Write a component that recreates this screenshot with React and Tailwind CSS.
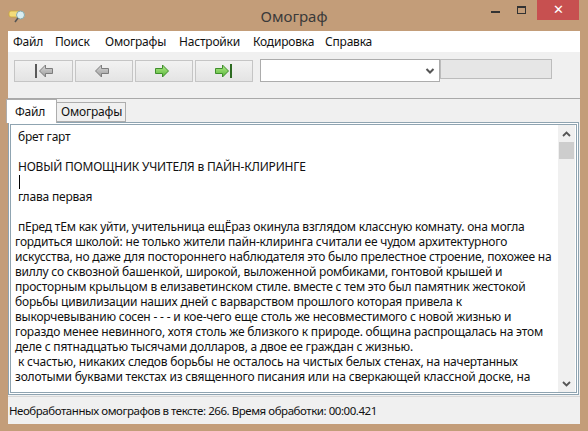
import React from "react";

const lines = [
  " брет гарт",
  "",
  " НОВЫЙ ПОМОЩНИК УЧИТЕЛЯ в ПАЙН-КЛИРИНГЕ",
  "CURSOR",
  " глава первая",
  "",
  " пЕред тЕм как уйти, учительница ещЁраз окинула взглядом классную комнату. она могла",
  "гордиться школой: не только жители пайн-клиринга считали ее чудом архитектурного",
  "искусства, но даже для постороннего наблюдателя это было прелестное строение, похожее на",
  "виллу со сквозной башенкой, широкой, выложенной ромбиками, гонтовой крышей и",
  "просторным крыльцом в елизаветинском стиле. вместе с тем это был памятник жестокой",
  "борьбы цивилизации наших дней с варварством прошлого которая привела к",
  "выкорчевыванию сосен - - - и кое-чего еще столь же несовместимого с новой жизнью и",
  "гораздо менее невинного, хотя столь же близкого к природе. община распрощалась на этом",
  "деле с пятнадцатью тысячами долларов, а двое ее граждан с жизнью.",
  " к счастью, никаких следов борьбы не осталось на чистых белых стенах, на начертанных",
  "золотыми буквами текстах из священного писания или на сверкающей классной доске, на",
];

function Arrow({ dir, bar, green }) {
  const fill = green ? "url(#g)" : "url(#s)";
  const stroke = green ? "#3f8f2c" : "#7d7d7d";
  const barColor = green ? "#2d6b22" : "#5a5a5a";
  const pts =
    dir === "right"
      ? "1.5,4.5 8.5,4.5 8.5,1 14.5,7 8.5,13 8.5,9.5 1.5,9.5"
      : "14.5,4.5 7.5,4.5 7.5,1 1.5,7 7.5,13 7.5,9.5 14.5,9.5";
  return (
    <svg width="20" height="14" viewBox={bar === "left" ? "-4 0 20 14" : "0 0 20 14"}>
      <defs>
        <linearGradient id="g" x1="0" y1="0" x2="0" y2="1">
          <stop offset="0" stopColor="#b4ec8c" />
          <stop offset="1" stopColor="#56b437" />
        </linearGradient>
        <linearGradient id="s" x1="0" y1="0" x2="0" y2="1">
          <stop offset="0" stopColor="#d8d8d8" />
          <stop offset="1" stopColor="#9c9c9c" />
        </linearGradient>
      </defs>
      <polygon points={pts} fill={fill} stroke={stroke} strokeWidth="1" />
      {bar === "left" && <rect x="-3" y="0" width="2" height="14" fill={barColor} />}
      {bar === "right" && <rect x="16" y="0" width="2" height="14" fill={barColor} />}
    </svg>
  );
}

function NavButton({ children, w }) {
  return (
    <div
      className={`${w} h-[22px] flex items-center justify-center border border-[#c5c5c5] bg-gradient-to-b from-[#f2f2f2] to-[#e4e4e4]`}
    >
      {children}
    </div>
  );
}

export default function App() {
  const font = { fontFamily: '"Noto Sans", "Open Sans", sans-serif' };
  return (
    <div
      className="w-[588px] h-[431px] bg-[#c39d79] flex flex-col overflow-hidden text-[12px] text-[#111] tracking-[-0.2px]"
      style={font}
    >
      {/* title bar */}
      <div className="h-[31px] flex items-start">
        <div className="pl-[8px] pt-[8px]">
          <svg width="18" height="16" viewBox="0 0 18 16">
            <rect x="1" y="3" width="11" height="6" rx="2" fill="#f3dc7a" stroke="#c9a53a" strokeWidth="0.8" />
            <circle cx="12.5" cy="7" r="4" fill="#d9eef2" stroke="#8aa" strokeWidth="1" />
            <line x1="10" y1="10" x2="7" y2="14" stroke="#555" strokeWidth="1.5" />
          </svg>
        </div>
        <div className="flex-1 text-center pt-[5px] text-[15px] tracking-normal text-[#3a3a3a] pl-[80px]">Омограф</div>
        <div className="flex items-start">
          <div className="w-[26px] h-[20px] flex items-center justify-center">
            <div className="w-[9px] h-[2px] bg-[#333] mt-[3px]"></div>
          </div>
          <div className="w-[26px] h-[20px] flex items-center justify-center">
            <div className="w-[9px] h-[8px] border border-[#333] border-t-2"></div>
          </div>
          <div className="w-[42px] h-[20px] bg-[#c75050] flex items-center justify-center text-white text-[13px] mr-[9px] ml-[3px]">
            ✕
          </div>
        </div>
      </div>

      {/* client */}
      <div className="flex-1 mx-[8px] mb-[7px] bg-[#f0f0f0] flex flex-col">
        {/* menu */}
        <div className="h-[21px] bg-white flex items-center pl-[5px]">
          <span className="w-[42px]">Файл</span>
          <span className="w-[50px]">Поиск</span>
          <span className="w-[74px]">Омографы</span>
          <span className="w-[74px]">Настройки</span>
          <span className="w-[72px]">Кодировка</span>
          <span>Справка</span>
        </div>

        {/* toolbar */}
        <div className="h-[47px] flex items-start pt-[7px] pl-[6px] border-b border-[#a9a9a9]">
          <div className="flex gap-[2px] mt-[1px]">
            <NavButton w="w-[59px]">
              <Arrow dir="left" bar="left" />
            </NavButton>
            <NavButton w="w-[58px]">
              <Arrow dir="left" />
            </NavButton>
            <NavButton w="w-[58px]">
              <Arrow dir="right" green />
            </NavButton>
            <NavButton w="w-[58px]">
              <Arrow dir="right" bar="right" green />
            </NavButton>
          </div>
          <div className="ml-[7px] w-[180px] h-[23px] bg-white border border-[#acacac] flex items-center justify-end pr-[4px]">
            <svg width="10" height="8" viewBox="0 0 10 8">
              <polyline points="1.5,2 5,5.5 8.5,2" fill="none" stroke="#555" strokeWidth="2" />
            </svg>
          </div>
          <div className="w-[112px] h-[20px] bg-[#e6e6e6] border border-[#bcbcbc]"></div>
        </div>

        {/* tabs */}
        <div className="h-[24px] flex items-end relative z-10">
          <div className="-ml-[2px] w-[51px] h-[24px] bg-white border border-[#adadad] border-b-0 flex items-center pl-[8px]">
            Файл
          </div>
          <div className="w-[69px] h-[20px] bg-[#f0f0f0] border border-[#adadad] border-l-0 flex items-center pl-[4px] mb-[1px]">
            Омографы
          </div>
        </div>

        {/* tab page */}
        <div className="h-[273px] -mt-[1px] mr-[1px] bg-white border border-[#8fa4b1] p-[1px]">
          <div className="h-full border border-[#8fa4b1] flex bg-white">
            <div className="flex-1 overflow-hidden pl-[4px] pt-[4px] leading-[15px] text-[12px]">
              {lines.map((l, i) =>
                l === "CURSOR" ? (
                  <div key={i} className="h-[15px] flex items-center pl-[4px]">
                    <span className="inline-block w-[1px] h-[14px] bg-black"></span>
                  </div>
                ) : (
                  <div key={i} className="h-[15px] whitespace-pre">
                    {l}
                  </div>
                )
              )}
            </div>
            <div className="w-[17px] bg-[#f0f0f0] flex flex-col items-center mr-[1px]">
              <div className="h-[17px] flex items-center justify-center">
                <svg width="9" height="6" viewBox="0 0 9 6">
                  <polyline points="1,5 4.5,1.5 8,5" fill="none" stroke="#555" strokeWidth="1.8" />
                </svg>
              </div>
              <div className="w-[15px] h-[17px] bg-[#cdcdcd]"></div>
              <div className="flex-1"></div>
              <div className="h-[17px] flex items-center justify-center">
                <svg width="9" height="6" viewBox="0 0 9 6">
                  <polyline points="1,1 4.5,4.5 8,1" fill="none" stroke="#555" strokeWidth="1.8" />
                </svg>
              </div>
            </div>
          </div>
        </div>

        {/* status */}
        <div className="flex-1 flex items-center pl-[1px] border-t border-[#d7d7d7] mt-[1px] text-[11.5px] tracking-[-0.45px]">
          Необработанных омографов в тексте: 266. Время обработки: 00:00.421
        </div>
      </div>
    </div>
  );
}
